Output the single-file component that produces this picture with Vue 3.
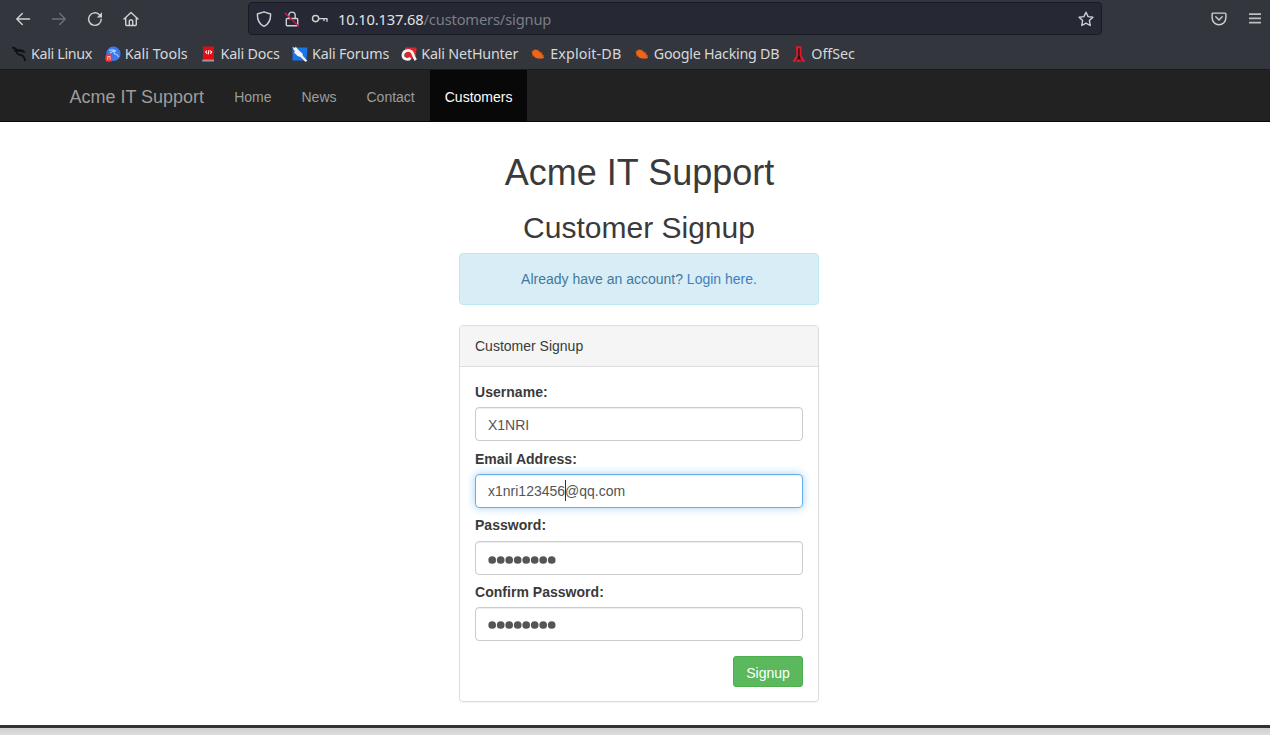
<script setup>
const bookmarks = [
  { label: 'Kali Linux', icon: 'kali', slot: 93.7, track: -0.33 },
  { label: 'Kali Tools', icon: 'tools', slot: 95.8, track: 0.03 },
  { label: 'Kali Docs', icon: 'docs', slot: 91.5, track: -0.18 },
  { label: 'Kali Forums', icon: 'forums', slot: 109.3, track: -0.17 },
  { label: 'Kali NetHunter', icon: 'hunter', slot: 129, track: -0.18 },
  { label: 'Exploit-DB', icon: 'bug', slot: 103.5, track: 0.12 },
  { label: 'Google Hacking DB', icon: 'bug', slot: 157.5, track: -0.26 },
  { label: 'OffSec', icon: 'offsec', slot: 80, track: -0.03 },
]
const links = ['Home', 'News', 'Contact', 'Customers']
const fields = [
  { label: 'Username:', value: 'X1NRI' },
  { label: 'Email Address:', value: 'x1nri123456', rest: '@qq.com', focus: true },
  { label: 'Password:', dots: 8 },
  { label: 'Confirm Password:', dots: 8 },
]
</script>

<template>
  <div class="window">
    <header class="chrome">
      <div class="toolbar">
        <div class="history">
          <svg class="ic" viewBox="0 0 16 16"><path d="M14.6 8H2M7.3 2.6 1.8 8l5.5 5.4" /></svg>
          <svg class="ic dim" viewBox="0 0 16 16"><path d="M1.4 8H14M8.7 2.6 14.2 8l-5.5 5.4" /></svg>
          <svg class="ic" viewBox="0 0 16 16"><path d="M14.2 8.2A6.3 6.3 0 1 1 12.1 3.4L14 5.2" /><path class="solid" d="M15 1.2v5.2H9.8z" /></svg>
          <svg class="ic" viewBox="0 0 16 16"><path d="M1 8 8 1.5 15 8M2.7 6.8v6.7a1 1 0 0 0 1 1h8.6a1 1 0 0 0 1-1V6.8M6.3 14.3V10a1 1 0 0 1 1-1h1.4a1 1 0 0 1 1 1v4.3" /></svg>
        </div>
        <div class="address">
          <svg class="ic" viewBox="0 0 16 16"><path d="M8 .8 14.6 3C14.8 8.2 13 13.1 8 15.4 3 13.1 1.2 8.2 1.4 3Z" /></svg>
          <svg class="ic lock" viewBox="0 0 16 16"><path d="M4.8 7.4V4.3a3.2 3.2 0 0 1 6.4 0v3.1M3.2 7.5h9.6a.9.9 0 0 1 .9.9v5.4a.9.9 0 0 1-.9.9H3.2a.9.9 0 0 1-.9-.9V8.4a.9.9 0 0 1 .9-.9Z" /><path class="slash" d="M1.2 2.3 14.5 15" /></svg>
          <svg class="ic key" viewBox="0 0 18 16"><circle cx="4.6" cy="7.6" r="3.1" /><path d="M7.7 7.6H16V10.2M13 7.6v2" /></svg>
          <div class="url"><span class="host">10.10.137.68</span>/customers/signup</div>
          <svg class="ic star" viewBox="0 0 16 16"><path d="M8 1.2 10.1 5.6 14.9 6.2 11.4 9.6 12.2 14.5 8 12.2 3.8 14.5 4.6 9.6 1.1 6.2 5.9 5.6Z" /></svg>
        </div>
        <div class="actions">
          <svg class="ic" viewBox="0 0 16 16"><path d="M2 2.1h12a.9.9 0 0 1 .9.9V6.8a6.9 6.9 0 0 1-13.8 0V3a.9.9 0 0 1 .9-.9ZM4.8 5.8 8 8.9l3.2-3.1" /></svg>
          <svg class="ic menu" viewBox="0 0 16 16"><path d="M2 3.1h12M2 7.4h12M2 11.7h12" /></svg>
        </div>
      </div>
      <nav class="bookmarks">
        <div v-for="b in bookmarks" :key="b.label" class="bookmark" :style="{ width: b.slot + 'px', letterSpacing: b.track + 'px' }">
          <svg v-if="b.icon === 'kali'" class="fav" viewBox="0 0 16 16"><path d="M1 1.5Q4 1.5 6.3 4.4M3 5.2Q6 3.4 12 5M6.3 4.5C5 7 6.5 8.6 9.5 8.9c3 .3 3.8 2.2 4.8 6" fill="none" stroke="#101114" stroke-width="1.8" /><path d="m7.5 3.2 4.8.8 2.6 2.8-3-.4-4-.8z" fill="#101114" /></svg>
          <svg v-else-if="b.icon === 'tools'" class="fav" viewBox="0 0 16 16"><circle cx="8.4" cy="7.8" r="7.2" fill="#367bf0" /><path d="M4 4.2q4-1 7 .8M5 7q3.2-2.7 6-1.8M10 5c-2 1.3-1 2.8 1 3.2q2 .5 2.5 3" fill="none" stroke="#b5d0fb" stroke-width="1.1" /><rect x=".5" y="8.3" width="6.8" height="7.4" rx="2.5" fill="#ee3b38" /><path d="M2.7 13.8V10.5h2.4v3.3" fill="none" stroke="#fbb" /></svg>
          <svg v-else-if="b.icon === 'docs'" class="fav" viewBox="0 0 16 16"><path d="M3 .5h11v13H3z" fill="#e30c12" /><path d="M2.3 13.5h11.7v2H2.3z" fill="#ab9599" /><path d="M6.9 4.7 5.6 6.1l1.6 1.6M9 4.2 8.2 8.4M10.2 4.7l1.4 1.4-1.2 1.8" fill="none" stroke="#fff" stroke-width="1.1" /></svg>
          <svg v-else-if="b.icon === 'forums'" class="fav" viewBox="0 0 16 16"><path d="M.5 1.5h15L14.5 14.5H.5z" fill="#1976e8" /><path d="m.3 1 2.8 1.1.5-1.6 2.4 3.1 4.6 4.1.2 2 4.6 5.3-2.1.7-4.7-4.8-3-.8L2 6.6l1-.9z" fill="#f2f4f6" /></svg>
          <svg v-else-if="b.icon === 'hunter'" class="fav" viewBox="0 0 16 16"><path d="M4 1.5h11.7L14.5 12.5H4z" fill="#dc2630" /><path d="M9.5 11.8C7 15 1.7 13 1.9 9 2.2 4.7 7.6 2.9 10.6 5.8c2 2.1 1.4 4.8 4.2 8.3" fill="none" stroke="#f5f5f5" stroke-width="2.7" /><path d="M4.5 10.5Q5.5 7.2 9 8.2" fill="none" stroke="#dc2630" stroke-width="2" /></svg>
          <svg v-else-if="b.icon === 'bug'" class="fav" viewBox="0 0 16 16"><path d="M2 5.8 4.6 3.6l3.4.7 4.5 4 1.6 3.6-3.6.9-4.6-.8-3.5-3z" fill="#ee6517" /><path d="m1.5 5.2 2 .2M3.5 9.8l-1.5.5M7.2 4.2l1.1-.6M10 6.9l2.3-.6M8 12l-1 .6M12 9.9l2-.4" stroke="#b95723" stroke-width=".8" /></svg>
          <svg v-else class="fav" viewBox="0 0 16 16"><path d="M4.8.3h5.6V9L14.4 15.8H1.4L5.5 9z" fill="#d91c2b" /><path d="M7.2 2.2h1.4v7.2l1.6 4.2H5.8l1.4-4.2z" fill="#350b12" /><path d="M5 15.6 6.6 12M10.8 15.6 9.2 12" stroke="#741721" /></svg>
          <span>{{ b.label }}</span>
        </div>
      </nav>
    </header>

    <nav class="navbar">
      <a class="brand">Acme IT Support</a>
      <a v-for="l in links" :key="l" class="link" :class="{ active: l === 'Customers' }">{{ l }}</a>
    </nav>

    <main class="page">
      <h1>Acme IT Support</h1>
      <h2>Customer Signup</h2>
      <div class="alert">Already have an account? <a>Login here.</a></div>
      <section class="panel">
        <div class="panel-head">Customer Signup</div>
        <form class="panel-body">
          <div v-for="f in fields" :key="f.label" class="field">
            <label>{{ f.label }}</label>
            <div class="control" :class="{ focus: f.focus, last: f.label === 'Confirm Password:' }">
              <template v-if="f.dots"><svg class="dots" viewBox="0 0 68 8"><circle v-for="n in f.dots" :key="n" :cx="n * 8.5 - 4.3" cy="4" r="3.85" /></svg></template>
              <template v-else>{{ f.value }}<span v-if="f.focus" class="caret"></span>{{ f.rest }}</template>
            </div>
          </div>
          <button type="button">Signup</button>
        </form>
      </section>
    </main>
    <footer class="edge"></footer>
  </div>
</template>

<style>
body { margin: 0; overflow: hidden; background: #fff; }
</style>

<style scoped>
* { box-sizing: border-box; }
.window { width: 1270px; height: 735px; display: flex; flex-direction: column; background: #fff; font-family: "Liberation Sans", Arial, sans-serif; font-size: 14px; line-height: 20px; color: #3a3a3a; overflow: hidden; }
.chrome { height: 70px; flex: none; background: #33363d; border-bottom: 1px solid #191a20; color: #d7d8da; font-family: "Noto Sans", sans-serif; }
.toolbar { height: 38px; display: flex; align-items: center; }
.ic { width: 16px; height: 16px; flex: none; fill: none; stroke: #d0d1d2; stroke-width: 1.4; stroke-linecap: round; stroke-linejoin: round; }
.ic .solid { fill: #d0d1d2; stroke: none; }
.ic.dim { stroke: #6c6f75; }
.history { width: 248px; padding-left: 15px; display: flex; gap: 20px; }
.address { width: 854px; height: 33px; margin-top: -1px; display: flex; align-items: center; padding-left: 7px; background: #262833; border: 1px solid #191b24; border-radius: 4px; }
.lock { margin-left: 12px; }
.ic .slash { stroke: #cf194b; stroke-width: 1.5; }
.key { width: 18px; margin-left: 11px; }
.url { margin-left: 9px; font-size: 14.7px; letter-spacing: -.16px; color: #7c7e85; white-space: nowrap; }
.host { color: #e1e2e4; }
.star { margin-left: auto; margin-right: 7px; }
.actions { margin-left: 109px; display: flex; gap: 20px; }
.menu { stroke: #bdbfbe; stroke-width: 1.8; stroke-linecap: butt; }
.bookmarks { height: 31px; padding-left: 11px; display: flex; align-items: center; }
.bookmark { display: flex; align-items: center; gap: 4px; flex: none; white-space: nowrap; font-size: 14.3px; }
.bookmark span { padding-top: 1px; }
.fav { width: 16px; height: 16px; flex: none; }
.navbar { height: 52px; flex: none; display: flex; align-items: stretch; padding-left: 54.4px; background: #222; border-bottom: 1px solid #080808; color: #9d9d9d; }
.brand { padding: 17px 15px 14px; font-size: 18px; }
.link { padding: 17px 15px 14px; }
.link.active { padding-right: 14.3px; background: #080808; color: #fff; }
.page { width: 360px; height: 603px; flex: none; margin-left: 459px; text-align: center; }
h1, h2 { margin: 0; font-weight: 400; white-space: nowrap; }
h1 { padding-top: 31px; padding-left: 1px; font-size: 36px; line-height: 40px; }
h2 { padding-top: 18px; font-size: 30px; line-height: 33px; }
.alert { height: 52px; margin-top: 9px; padding: 15px; background: #d9edf7; border: 1px solid #bce8f1; border-radius: 4px; color: #41799a; }
.alert a { color: #4080bb; }
.panel { height: 377px; margin-top: 20px; border: 1px solid #ddd; border-radius: 4px; text-align: left; box-shadow: 0 1px 1px rgba(0, 0, 0, .05); }
.panel-head { height: 41px; padding: 10px 15px; background: #f5f5f5; border-bottom: 1px solid #ddd; border-radius: 3px 3px 0 0; }
.panel-body { padding: 15px; display: flex; flex-direction: column; }
.field { height: 66.7px; }
label { display: block; height: 25.3px; font-weight: 700; letter-spacing: .03px; }
.control { height: 34px; padding: 7px 12px 5px; display: flex; border: 1px solid #ccc; border-radius: 4px; box-shadow: inset 0 1px 1px rgba(0, 0, 0, .075); color: #555; }
.control.focus { padding-top: 6px; border-color: #66afe9; box-shadow: inset 0 1px 1px rgba(0, 0, 0, .075), 0 0 8px rgba(102, 175, 233, .6); }
.caret { width: 1px; height: 21px; margin: -1px -1px 0 0; background: #333; }
.dots { width: 68px; height: 8px; margin-top: 7px; fill: #555; }
.last .dots { margin-top: 6px; }
button { align-self: flex-end; width: 70px; height: 31px; margin-top: 7px; padding: 4px 0 0; background: #5cb85c; border: 1px solid #4cae4c; border-radius: 3px; color: #fff; font: 14px/20px "Liberation Sans", Arial, sans-serif; }
.edge { height: 10px; flex: none; background: linear-gradient(#cfcdce, #dedede); border-top: 3px solid #303238; }
</style>
